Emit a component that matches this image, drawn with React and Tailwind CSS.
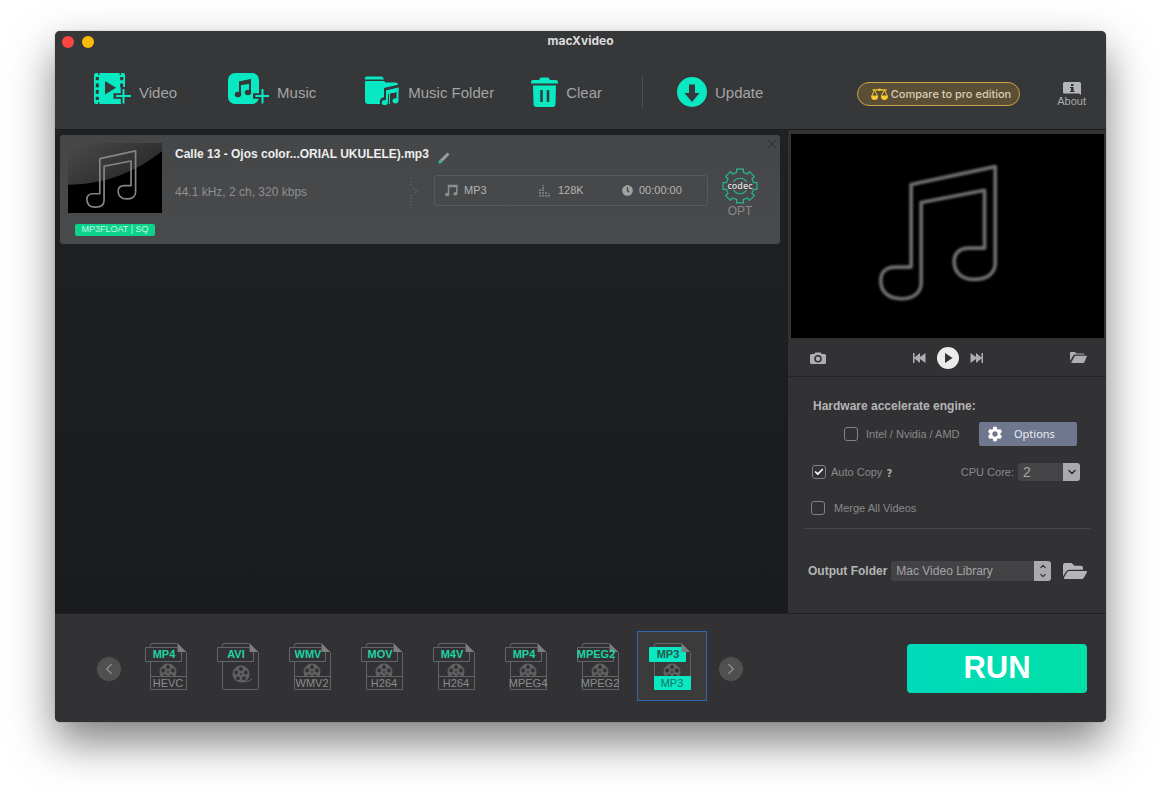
import { useState } from "react";
import { FaClock, FaFolderOpen } from "react-icons/fa";
import { MdSettings } from "react-icons/md";
import { Check, ChevronDown, ChevronLeft, ChevronRight, ChevronUp, X } from "lucide-react";

const NOTE_PATH =
  "M378 164 L630 110 V400 C630 432 604 449 568 449 C530 449 507 428 507 395 C507 370 524 355 550 355 H598 V181 L408 218 V458 C408 490 384 507 348 507 C310 507 287 487 287 453 C287 427 304 412 330 412 H378 Z";

const FORMATS = [
  { id: "mp4-hevc", tag: "MP4", label: "HEVC" },
  { id: "avi", tag: "AVI", label: "" },
  { id: "wmv", tag: "WMV", label: "WMV2" },
  { id: "mov", tag: "MOV", label: "H264" },
  { id: "m4v", tag: "M4V", label: "H264" },
  { id: "mp4", tag: "MP4", label: "MPEG4" },
  { id: "mpeg2", tag: "MPEG2", label: "MPEG2" },
  { id: "mp3", tag: "MP3", label: "MP3" },
];

function getGearPath(cx, cy, outer, inner) {
  const points = [];
  const teeth = 8;

  for (let i = 0; i < teeth; i += 1) {
    const mid = (i / teeth) * Math.PI * 2 - Math.PI / 2;

    [
      [inner, -0.24],
      [outer, -0.2],
      [outer, 0.2],
      [inner, 0.24],
    ].forEach(([radius, offset]) => {
      const x = cx + radius * Math.cos(mid + offset);
      const y = cy + radius * Math.sin(mid + offset);
      points.push(`${x.toFixed(2)} ${y.toFixed(2)}`);
    });
  }

  return `M${points.join("L")}Z`;
}

function VideoIcon() {
  return (
    <svg viewBox="0 0 37 31" className="mb-2 h-[31px] w-[37px]" fill="#08e8c2">
      <path d="M2 0H29Q31 0 31 2V29Q31 31 29 31H2Q0 31 0 29V2Q0 0 2 0Z" />
      <g fill="#363738">
        <rect x="1.8" y="4" width="3" height="3.2" />
        <rect x="1.8" y="10.5" width="3" height="3.8" />
        <rect x="1.8" y="17" width="3" height="3.8" />
        <rect x="1.8" y="23.8" width="3" height="3.2" />
        <rect x="26.2" y="4" width="3" height="3.2" />
        <rect x="26.2" y="10.5" width="3" height="3.8" />
        <rect x="4" y="0" width="1.4" height="2" />
        <rect x="4" y="29" width="1.4" height="2" />
        <rect x="25.6" y="0" width="1.4" height="2" />
        <path d="M11 8L22 14.8L11 21.6Z" />
      </g>
      <path d="M29.5 14V31M19.5 23H37" stroke="#363738" strokeWidth="5.5" />
      <path d="M29.5 16V30.5M22 23H37" stroke="#08e8c2" strokeWidth="2" />
      <path d="M20 29.5H27V31H20Z" />
    </svg>
  );
}

function MusicIcon() {
  return (
    <svg viewBox="0 0 41 31" className="mb-2 h-[31px] w-[41px]" fill="#08e8c2">
      <rect width="31" height="31" rx="7" />
      <path d="M34.5 13V31M25 23H40" stroke="#363738" strokeWidth="5.5" />
      <path d="M34.5 16V30.5M27.5 23H41" stroke="#08e8c2" strokeWidth="2" />
      <path d="M12 21V9.5L22 7.5V19" fill="none" stroke="#363738" strokeWidth="2" />
      <path d="M11 8.5L23 6V10.5L11 12.5Z" fill="#363738" />
      <ellipse cx="10" cy="21.5" rx="3.2" ry="2.8" fill="#363738" />
      <ellipse cx="20" cy="19.5" rx="3.2" ry="2.8" fill="#363738" />
    </svg>
  );
}

function MusicFolderIcon() {
  return (
    <svg viewBox="0 0 36 31" className="mb-1 h-[31px] w-[36px]" fill="#08e8c2">
      <path d="M1 4.5V3Q1 1.5 2.5 1.5H17Q18.5 1.5 19 2.5L20 4.5Z" />
      <path d="M1 6H20L21.5 7.5H31.5Q34 7.5 34 10V26Q34 29 31 29H4Q1 29 1 26Z" />
      <path d="M22.5 26V15L33.5 12.5V25" fill="none" stroke="#363738" strokeWidth="5" />
      <circle cx="20.5" cy="27" r="4.8" fill="#363738" />
      <circle cx="31" cy="26" r="4.5" fill="#363738" />
      <path d="M26 18H32V30H26Z" fill="#363738" />
      <path d="M23 27V16.5L33.5 14V25.5" fill="none" stroke="#08e8c2" strokeWidth="2" />
      <path d="M22 15.5L34.5 12.5V16.5L22 19.5Z" />
      <ellipse cx="20.8" cy="27.5" rx="3" ry="2.6" />
      <ellipse cx="31.5" cy="25.8" rx="3" ry="2.6" />
    </svg>
  );
}

function TrashIcon() {
  return (
    <svg viewBox="0 0 27 30" className="h-[30px] w-[27px]" fill="#08e8c2">
      <path d="M0 6.5V5Q0 3 2 3H8L9.5 0.5H17.5L19 3H25Q27 3 27 5V6.500Z" />
      <path d="M2 8.5H25L24.5 27Q24.5 30 21.5 30H5.5Q2.5 30 2.5 27Z" />
      <path d="M10.5 13V25M17 13V25" stroke="#363738" strokeWidth="2.5" />
    </svg>
  );
}

function UpdateIcon() {
  return (
    <svg viewBox="0 0 30 30" className="h-[30px] w-[30px]">
      <circle cx="15" cy="15" r="15" fill="#08e8c2" />
      <path d="M12 7.5H18V16H22.5L15 25L7.5 16H12Z" fill="#363738" />
    </svg>
  );
}

function ScalesIcon() {
  return (
    <svg viewBox="0 0 17 13" className="h-[13px] w-[17px]" fill="none" stroke="#f7c92e">
      <path d="M1.5 1.8H15.5" strokeWidth="1.2" />
      <circle cx="8.5" cy="1.8" r="1.3" fill="#f7c92e" stroke="none" />
      <path d="M3.5 2L1 7.5M3.5 2L6.5 7.5M13.5 2L10.5 7.5M13.5 2L16 7.5" />
      <path d="M0 7.5H7.2Q7.2 12 3.6 12Q0 12 0 7.5ZM9.8 7.5H17Q17 12 13.4 12Q9.8 12 9.8 7.5Z" fill="#f7c92e" stroke="none" />
    </svg>
  );
}

function NoteArt({ viewBox, color, strokeWidth, soft, gloss, className }) {
  return (
    <svg viewBox={viewBox} preserveAspectRatio="none" className={className}>
      {gloss && (
        <>
          <defs>
            <linearGradient id="gloss" x1="0" y1="0" x2="1" y2="0.7">
              <stop offset="0" stopColor="#4a4a4a" />
              <stop offset="1" stopColor="#262626" />
            </linearGradient>
          </defs>
          <path d="M154 54H816V113C640 250 430 348 154 348Z" fill="url(#gloss)" />
        </>
      )}
      {soft && (
        <filter id="soft" x="-10%" y="-10%" width="120%" height="120%">
          <feGaussianBlur stdDeviation="3.5" />
        </filter>
      )}
      <path
        d={NOTE_PATH}
        fill="none"
        stroke={color}
        strokeWidth={strokeWidth}
        strokeLinejoin="round"
        filter={soft ? "url(#soft)" : undefined}
      />
    </svg>
  );
}

function ToolButton({ icon, label, className = "" }) {
  return (
    <button
      type="button"
      className={`flex shrink-0 items-center gap-2 text-[15px] text-[#a3a4a5] ${className}`}
    >
      {icon}
      <span className="pt-0.5">{label}</span>
    </button>
  );
}

function TitleBar() {
  return (
    <div className="relative flex h-5 items-center justify-center">
      <div className="absolute top-[5px] left-[7px] flex gap-2">
        <button type="button" aria-label="Close window" className="h-3 w-3 rounded-full bg-[#fd4642]" />
        <button type="button" aria-label="Minimize window" className="h-3 w-3 rounded-full bg-[#fcbb0a]" />
      </div>
      <h1 className="font-[Inter,sans-serif] text-xs font-bold text-[#dcdcdc]">macXvideo</h1>
    </div>
  );
}

function Toolbar() {
  return (
    <header className="flex h-[79px] items-center border-b border-[#1b1c1d] pt-1 pr-5 pl-[39px]">
      <ToolButton icon={<VideoIcon />} label="Video" />
      <ToolButton icon={<MusicIcon />} label="Music" className="ml-[51px]" />
      <ToolButton icon={<MusicFolderIcon />} label="Music Folder" className="ml-12" />
      <ToolButton icon={<TrashIcon />} label="Clear" className="ml-[37px]" />
      <span className="ml-10 h-[34px] w-px bg-[#4e4f50]" />
      <ToolButton icon={<UpdateIcon />} label="Update" className="ml-[34px]" />

      <button
        type="button"
        className="mt-1 ml-auto flex h-6 items-center gap-[3px] rounded-full border border-[#cda344] bg-[#5a4f36] pr-2 pl-[13px] font-[Inter,sans-serif] text-[11px] font-medium text-[#d9cdb4]"
      >
        <ScalesIcon />
        Compare to pro edition
      </button>

      <button
        type="button"
        className="mt-1 ml-[37px] flex flex-col items-center text-[11px] leading-3 text-[#a9aaab]"
      >
        <svg viewBox="0 0 18 13" className="h-[13px] w-[18px]">
          <path d="M1.5 0H16.5Q18 0 18 1.5V13L16 11.5H1.5Q0 11.5 0 10V1.5Q0 0 1.5 0Z" fill="#b5b6b7" />
          <path d="M8 2H10.5V4H8ZM7 5H10.5V9H11.5V10H7V9H8V6H7Z" fill="#303132" />
        </svg>
        About
      </button>
    </header>
  );
}

function FileCard() {
  return (
    <article className="relative mt-[5px] mr-[7px] ml-[5px] flex h-[109px] rounded-[3px] bg-gradient-to-b from-[#454647] to-[#484a4b] px-2 pt-2">
      <div className="flex w-[94px] shrink-0 flex-col items-center">
        <NoteArt
          viewBox="154 54 662 494"
          color="#858585"
          strokeWidth={12}
          gloss
          className="h-[70px] w-[94px] bg-black"
        />
        <span className="mt-[11px] flex h-3 w-20 items-center justify-center rounded-xs bg-[#0cd28c] text-[9px] whitespace-nowrap text-[#c6f7e4]">
          MP3FLOAT | SQ
        </span>
      </div>

      <div className="ml-[13px] min-w-0 flex-1 pt-[3px]">
        <div className="flex h-4 items-center text-xs font-bold whitespace-nowrap text-[#eeeeee]">
          Calle 13 - Ojos color...ORIAL UKULELE).mp3
          <button type="button" aria-label="Rename" className="mt-2 ml-[9px]">
            <svg viewBox="0 0 12 12" className="h-3 w-3">
              <path d="M9.5 0.5L11.5 2.5L4 10L1.8 8Z" fill="#9b9c9d" />
              <path d="M1.5 8.5L3.5 10.5L1 11Z" fill="#1fd3a4" stroke="#1fd3a4" />
            </svg>
          </button>
        </div>

        <div className="mt-[13px] flex h-[31px] items-center">
          <p className="flex-1 pt-0.5 text-xs whitespace-nowrap text-[#8f9091]">44.1 kHz, 2 ch, 320 kbps</p>
          <svg viewBox="0 0 10 28" className="mr-[14px] h-7 w-[10px]" fill="none" stroke="#6f7071">
            <path d="M1 1V10M1 18V28" strokeDasharray="1 2" />
            <path d="M3 11L8 14L3 17" strokeDasharray="1 2" />
          </svg>
          <div className="flex h-[31px] w-[274px] items-center rounded-[3px] border border-[#58595a] pl-[10px] text-[11px] text-[#b4b5b6]">
            <span className="flex w-[94px] items-center gap-1.5">
              <svg viewBox="0 0 13 13" className="h-[13px] w-[13px]" fill="#8d8e8f">
                <path d="M3.5 10V1.5H11.8V9.5" fill="none" stroke="#8d8e8f" strokeWidth="1.5" />
                <path d="M3 1H12.5V3.2H3Z" />
                <ellipse cx="2.2" cy="10.5" rx="2.2" ry="1.8" />
                <ellipse cx="10.5" cy="9.8" rx="2.2" ry="1.8" />
              </svg>
              MP3
            </span>
            <span className="flex w-[83px] items-center gap-2">
              <svg viewBox="0 0 11 12" className="h-3 w-[11px]" stroke="#9a9b9c" strokeWidth="1.5" strokeDasharray="1.5 1.2">
                <path d="M1 11.5V4M4 11.5V0M7 11.5V6M10 11.5V8" />
              </svg>
              128K
            </span>
            <span className="flex items-center gap-1.5">
              <FaClock className="h-[11px] w-[11px] text-[#a1a2a3]" />
              00:00:00
            </span>
          </div>
        </div>
      </div>

      <button
        type="button"
        className="mt-[25px] mr-[14px] ml-[14px] flex h-[50px] w-9 shrink-0 flex-col items-center text-xs leading-[14px] text-[#87888a]"
      >
        <span className="relative flex h-9 w-9 items-center justify-center">
          <svg viewBox="0 0 36 36" className="h-9 w-9" fill="none" stroke="#24b894" strokeWidth="1.2">
            <path d={getGearPath(18, 18, 17.3, 14)} strokeLinejoin="round" />
            <path d="M11.5 14A7.5 7.5 0 0 1 24.5 14M11.5 22A7.5 7.5 0 0 0 24.5 22" />
          </svg>
          <span className="absolute font-[Open_Sans,sans-serif] text-[9px] font-semibold text-[#dcdcdc]">codec</span>
        </span>
        OPT
      </button>

      <button type="button" aria-label="Remove file" className="absolute top-px right-0 text-[#2b2c2d]">
        <X strokeWidth={1.5} className="h-4 w-4" />
      </button>
    </article>
  );
}

function Preview() {
  return (
    <section className="border-b border-[#232425]">
      <div className="pt-1 pr-[2px] pl-[3px]">
        <NoteArt
          viewBox="18 12 938 613"
          color="#707070"
          strokeWidth={11}
          soft
          className="h-[204px] w-full bg-black"
        />
      </div>
      <div className="grid h-[38px] grid-cols-3 items-center pt-px pr-[19px] pl-[22px] text-[#adaeb0]">
        <button type="button" aria-label="Take snapshot" className="justify-self-start">
          <svg viewBox="0 0 16 12" className="h-3 w-4" fill="currentColor">
            <path d="M1.5 2H4L5.5 0.5H10.5L12 2H14.5Q16 2 16 3.5V10.5Q16 12 14.5 12H1.5Q0 12 0 10.5V3.5Q0 2 1.5 2Z" />
            <circle cx="8" cy="6.8" r="3" fill="none" stroke="#323234" strokeWidth="1.5" />
          </svg>
        </button>
        <div className="flex items-center justify-center gap-[11px]">
          <button type="button" aria-label="Previous">
            <svg viewBox="0 0 13 10" className="h-[10px] w-[13px]" fill="currentColor">
              <path d="M0 0H1.5V4.5L7 0V4L12.5 0V10L7 6V10L1.5 5.5V10H0Z" />
            </svg>
          </button>
          <button type="button" aria-label="Play">
            <svg viewBox="0 0 22 22" className="h-[22px] w-[22px]">
              <circle cx="11" cy="11" r="11" fill="#ececed" />
              <path d="M8 6L15.5 11L8 16Z" fill="#303132" />
            </svg>
          </button>
          <button type="button" aria-label="Next">
            <svg viewBox="0 0 13 10" className="h-[10px] w-[13px]" fill="currentColor">
              <path d="M13 0H11.5V4.5L6 0V4L0.5 0V10L6 6V10L11.5 5.5V10H13Z" />
            </svg>
          </button>
        </div>
        <button type="button" aria-label="Open folder" className="justify-self-end">
          <svg viewBox="0 0 17 11" className="h-[11px] w-[17px]" fill="currentColor">
            <path d="M0 9V1Q0 0 1 0H5L6.5 1.5H13.5Q14.5 1.5 14.5 2.5H5Q3.8 2.5 3.3 3.5Z" />
            <path d="M5 3.8H17L14.5 10Q14 11 13 11H1Z" />
          </svg>
        </button>
      </div>
    </section>
  );
}

function CheckBox({ id, label, checked, onChange, className = "" }) {
  return (
    <label htmlFor={id} className={`flex items-center text-[11px] text-[#88898b] ${className}`}>
      <span className="relative flex h-[14px] w-[14px] items-center justify-center">
        <input
          id={id}
          type="checkbox"
          checked={checked}
          onChange={(e) => onChange(e.target.checked)}
          className="h-[14px] w-[14px] appearance-none rounded-[3px] border border-[#808183]"
        />
        {checked && <Check strokeWidth={4} className="pointer-events-none absolute h-[10px] w-[10px] text-white" />}
      </span>
      {label}
    </label>
  );
}

function Settings() {
  const [hardware, setHardware] = useState(false);
  const [autoCopy, setAutoCopy] = useState(true);
  const [merge, setMerge] = useState(false);

  return (
    <section className="flex-1 px-4 pt-[21px]">
      <h2 className="pl-[9px] text-xs leading-4 font-bold text-[#b4b5b6]">Hardware accelerate engine:</h2>

      <div className="mt-2 flex items-center justify-between pr-[13px] pl-10">
        <CheckBox
          id="hardware"
          label="Intel / Nvidia / AMD"
          checked={hardware}
          onChange={setHardware}
          className="gap-2"
        />
        <button
          type="button"
          className="flex h-6 w-[98px] items-center gap-[10px] rounded-xs bg-[#6e778e] pl-[7px] font-[Noto_Sans,sans-serif] text-[11px] text-[#eceef2]"
        >
          <MdSettings className="h-[18px] w-[18px] text-white" />
          Options
        </button>
      </div>

      <div className="mt-[17px] flex h-[18px] items-center pr-[10px] pl-2">
        <CheckBox
          id="auto-copy"
          label="Auto Copy"
          checked={autoCopy}
          onChange={setAutoCopy}
          className="gap-[5px]"
        />
        <button type="button" aria-label="About auto copy" className="mt-0.5 ml-1 font-[DejaVu_Sans,sans-serif] text-[10px] font-bold text-[#a9aaab]">
          ?
        </button>
        <label htmlFor="cpu-core" className="ml-auto text-[11px] text-[#88898b]">
          CPU Core:
        </label>
        <span className="relative ml-1 flex">
          <select
            id="cpu-core"
            defaultValue="2"
            className="h-[18px] w-[62px] appearance-none rounded-[3px] bg-[#454547] pl-[5px] text-sm leading-[18px] text-[#a6a7a8]"
          >
            <option>1</option>
            <option>2</option>
            <option>4</option>
          </select>
          <span className="pointer-events-none absolute top-0 right-0 flex h-[18px] w-[17px] items-center justify-center rounded-r-[3px] bg-[#a9aaae] text-[#2c2c2e]">
            <ChevronDown strokeWidth={3} className="h-3 w-3" />
          </span>
        </span>
      </div>

      <CheckBox
        id="merge"
        label="Merge All Videos"
        checked={merge}
        onChange={setMerge}
        className="mt-[19px] gap-[9px] pl-[7px]"
      />

      <hr className="mt-[11px] border-[#454648]" />

      <div className="mt-[30px] flex items-center pr-[3px] pl-1">
        <label htmlFor="output" className="text-xs font-bold whitespace-nowrap text-[#b4b5b6]">
          Output Folder
        </label>
        <span className="relative ml-1 flex flex-1">
          <select
            id="output"
            className="h-5 w-full appearance-none rounded-[3px] bg-[#434345] pl-[5px] text-xs text-[#a3a4a5]"
          >
            <option>Mac Video Library</option>
          </select>
          <span className="pointer-events-none absolute top-0 right-0 flex h-5 w-[17px] flex-col items-center justify-center rounded-r-[3px] bg-[#a9aaae] text-[#2c2c2e]">
            <ChevronUp strokeWidth={3} className="h-[9px] w-3" />
            <ChevronDown strokeWidth={3} className="h-[9px] w-3" />
          </span>
        </span>
        <button type="button" aria-label="Browse output folder" className="ml-3 text-[#b4b5b8]">
          <FaFolderOpen className="h-6 w-6" />
        </button>
      </div>
    </section>
  );
}

function Reel({ cx, cy }) {
  return (
    <g>
      <circle cx={cx} cy={cy} r="8.5" fill="#5f6061" />
      <g fill="#323234">
        <circle cx={cx} cy={cy - 5} r="1.9" />
        <circle cx={cx - 4.8} cy={cy - 1.5} r="1.9" />
        <circle cx={cx + 4.8} cy={cy - 1.5} r="1.9" />
        <circle cx={cx - 3} cy={cy + 4.2} r="1.9" />
        <circle cx={cx + 3} cy={cy + 4.2} r="1.9" />
        <circle cx={cx} cy={cy} r="1" />
      </g>
    </g>
  );
}

function FormatButton({ format, active, onSelect }) {
  return (
    <button
      type="button"
      aria-pressed={active}
      onClick={() => onSelect(format.id)}
      className={`relative h-[70px] w-[70px] shrink-0 border ${
        active ? "border-[#2a69ad] bg-[#3b3b3c]" : "border-transparent"
      }`}
    >
      <svg viewBox="1 1 68 68" className="h-[68px] w-[68px]" fill="none" stroke="#636465">
        <g stroke="none">
          <Reel cx={format.label ? 35 : 36} cy={format.label ? 41 : 43} />
          {!format.label && <path d="M38 51Q44 51 47 48" stroke="#636465" />}
        </g>
        <path d="M17.5 16.5V14Q17.5 12.5 19 12.5H44.5L53.5 21.5V57Q53.5 58.5 52 58.5H19Q17.5 58.5 17.5 57V30.5" />
        <path
          d="M12.5 16.5H48.5V30.5H12.5Z"
          fill={active ? "#08e8c2" : "#323234"}
          stroke={active ? "#08e8c2" : "#636465"}
        />
        <path d="M44.5 12.5V21H53Z" fill="#7c7d7e" stroke="none" />
        {format.label && (
          <path
            d="M17.5 45.5H53.5V58.5H17.5Z"
            fill={active ? "#08e8c2" : "#323234"}
            stroke={active ? "#08e8c2" : "#636465"}
          />
        )}
      </svg>
      <span
        className={`absolute top-[15px] left-3 flex h-[14px] w-9 items-center justify-center text-[11px] font-bold ${
          active ? "text-[#23594f]" : "text-[#1fd3a4]"
        }`}
      >
        {format.tag}
      </span>
      <span
        className={`absolute top-11 left-4 flex h-[14px] w-9 items-center justify-center text-[11px] ${
          active ? "text-[#1b7263]" : "text-[#8b8c8d]"
        }`}
      >
        {format.label}
      </span>
    </button>
  );
}

function FormatBar() {
  const [selected, setSelected] = useState("mp3");

  return (
    <footer className="flex h-[109px] items-center border-t border-[#1f2021] bg-[#323234] pt-0.5 pr-[19px] pl-[42px]">
      <button
        type="button"
        aria-label="Previous formats"
        className="flex h-6 w-6 shrink-0 items-center justify-center rounded-full bg-[#505051] text-[#929394]"
      >
        <ChevronLeft strokeWidth={1.5} className="h-[18px] w-[18px]" />
      </button>
      <div className="mx-3 mb-1.5 flex gap-0.5">
        {FORMATS.map((format) => (
          <FormatButton
            key={format.id}
            format={format}
            active={selected === format.id}
            onSelect={setSelected}
          />
        ))}
      </div>
      <button
        type="button"
        aria-label="Next formats"
        className="flex h-6 w-6 shrink-0 items-center justify-center rounded-full bg-[#505051] text-[#929394]"
      >
        <ChevronRight strokeWidth={1.5} className="h-[18px] w-[18px]" />
      </button>

      <button
        type="button"
        className="mb-0.5 ml-auto h-[49px] w-[180px] rounded-sm bg-gradient-to-r from-[#00dabb] to-[#00e0a6] text-[31px] leading-8 font-bold text-white"
      >
        RUN
      </button>
    </footer>
  );
}

export default function App() {
  return (
    <div className="flex min-h-screen bg-white px-[55px] pt-[31px] pb-[78px] font-[Liberation_Sans,Arial,sans-serif]">
      <div className="flex flex-1 flex-col overflow-hidden rounded-[5px] bg-[#363738] shadow-[0_20px_44px_rgba(0,0,0,0.5),0_0_1px_rgba(0,0,0,0.6)]">
        <TitleBar />
        <Toolbar />
        <div className="flex flex-1">
          <main className="min-w-0 flex-1 bg-gradient-to-b from-[#202122] to-[#1a1b1c]">
            <FileCard />
          </main>
          <aside className="flex w-[319px] flex-col border-l border-[#1b1c1d] bg-[#323234]">
            <Preview />
            <Settings />
          </aside>
        </div>
        <FormatBar />
      </div>
    </div>
  );
}
